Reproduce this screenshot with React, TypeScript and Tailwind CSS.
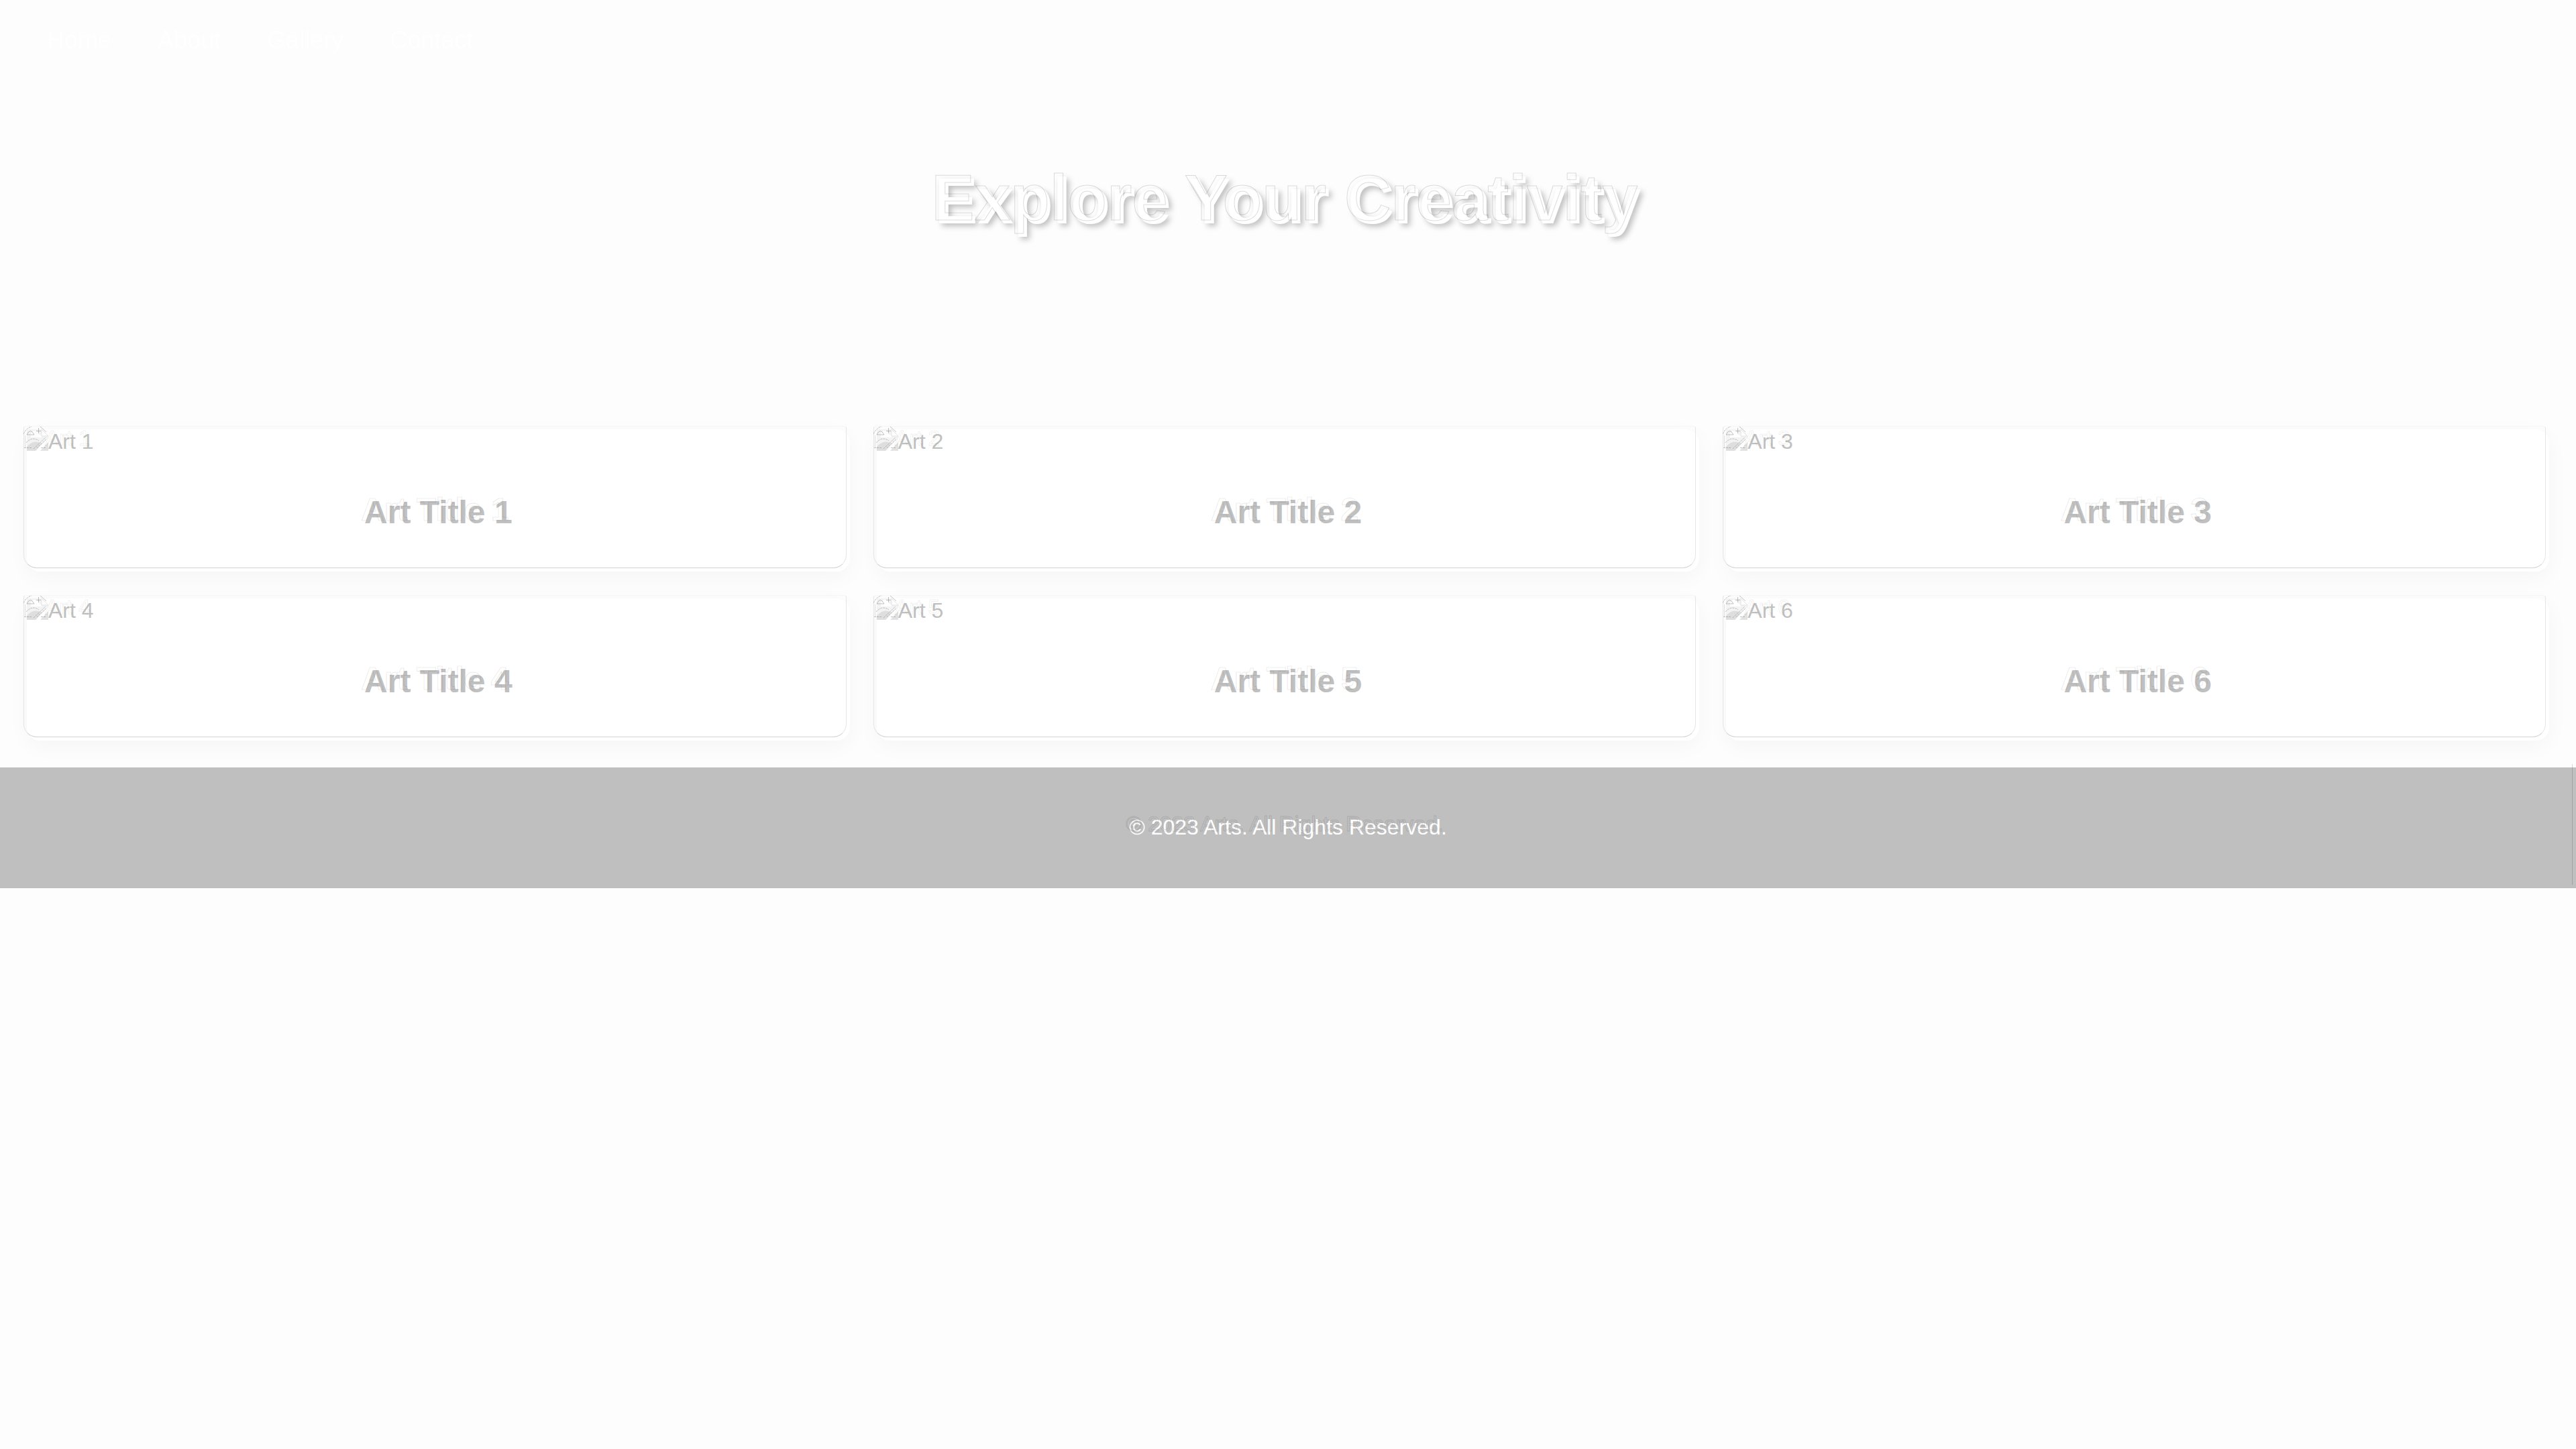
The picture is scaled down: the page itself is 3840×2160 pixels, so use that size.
const ghost =
  "relative before:pointer-events-none before:absolute before:-left-[5px] before:-top-[5px] before:whitespace-nowrap before:text-transparent before:content-[attr(data-text)]";

function BrokenImage() {
  return (
    <span className="relative block size-8 shrink-0">
      <svg viewBox="0 0 32 32" className="block size-8" aria-hidden="true">
        <path d="M0 0H22L32 10V12L14 32H0Z" fill="#f3f3f3" />
        <path d="M0 26Q10 14 22 21L13 32H0Z" fill="#dedede" />
        <path d="M6 8a5 5 0 0 1 12 0q4 0 4 4H6Z" fill="#fff" />
        <path d="M22 0V10H32Z" fill="#fff" stroke="#e4e4e4" />
        <path d="M32 19V32H20Z" fill="#e2e2e2" />
      </svg>
      <svg viewBox="0 0 38 38" className="absolute -left-[5px] -top-[5px] size-[38px]" fill="none" stroke="#8f8f8f" strokeOpacity="0.55" aria-hidden="true">
        <path d="M0 12Q4 3 12 1" strokeDasharray="3 1" />
        <path d="M2.5 14V32" strokeOpacity="0.25" />
        <path d="M25 1l9 8M22.5 3v8M19 7.500h7M5 13q5-11 11 0z" />
        <path d="M4 25Q13 15 23 22M15 34L33 17M20 33L34 20M1 32.500h12M26 32.500h8" strokeDasharray="3 1" />
      </svg>
    </span>
  );
}

function Card({ n }: { n: number }) {
  return (
    <article className="relative h-[212px] rounded-[20px] bg-white text-[#c0c0c0] shadow-[0_8px_32px_rgba(0,0,0,0.035)]">
      <div className="pointer-events-none absolute -left-[5px] -top-[5px] h-full w-full rounded-t-[4px] rounded-b-[20px] border border-t-[#f6f6f6] border-r-[#e6e6e6] border-b-[#d4d4d4] border-l-[#e6e6e6]" />
      <div role="img" aria-label={`Art ${n}`} className="flex h-9 items-start">
        <BrokenImage />
        <span
          data-text={`Art ${n}`}
          className={`${ghost} text-[32px] leading-[36px] before:[-webkit-text-stroke:1px_rgba(0,0,0,0.08)]`}
        >
          Art {n}
        </span>
      </div>
      <h2 className="mt-[60px] text-center text-[48px] font-bold leading-[56px]">
        <span
          data-text={`Art Title ${n}`}
          className={`${ghost} before:[-webkit-text-stroke:1px_rgba(0,0,0,0.1)]`}
        >
          Art Title {n}
        </span>
      </h2>
    </article>
  );
}

export default function App() {
  return (
    <div className="min-h-screen bg-[#fdfdfd] font-['Liberation_Sans',Arial,sans-serif]">
      <nav className="flex h-[120px] items-center gap-[69px] px-[70px] text-[36px] leading-[40px] text-white">
        {["Home", "About", "Gallery", "Contact"].map((t) => (
          <a key={t} href={`#${t.toLowerCase()}`}>
            {t}
          </a>
        ))}
      </nav>
      <header className="flex h-[480px] justify-center pt-[125px]">
        <h1
          data-text="Explore Your Creativity"
          className={`${ghost} h-[110px] text-[96px] font-bold leading-[110px] text-white [text-shadow:4px_4px_8px_rgba(0,0,0,0.25)] before:[-webkit-text-stroke:1px_rgba(0,0,0,0.14)] before:[text-shadow:none]`}
        >
          Explore Your Creativity
        </h1>
      </header>
      <main className="grid grid-cols-3 gap-10 p-10">
        {[1, 2, 3, 4, 5, 6].map((n) => (
          <Card key={n} n={n} />
        ))}
      </main>
      <footer className="relative bg-[#bfbfbf] pt-[71px] pb-[73px] text-center text-[32px] leading-[36px] text-white">
        <div className="pointer-events-none absolute -top-[5px] right-[5px] h-full w-px bg-black/15" />
        <span
          data-text="© 2023 Arts. All Rights Reserved."
          className={`${ghost} before:[-webkit-text-stroke:1px_rgba(0,0,0,0.12)]`}
        >
          © 2023 Arts. All Rights Reserved.
        </span>
      </footer>
    </div>
  );
}
